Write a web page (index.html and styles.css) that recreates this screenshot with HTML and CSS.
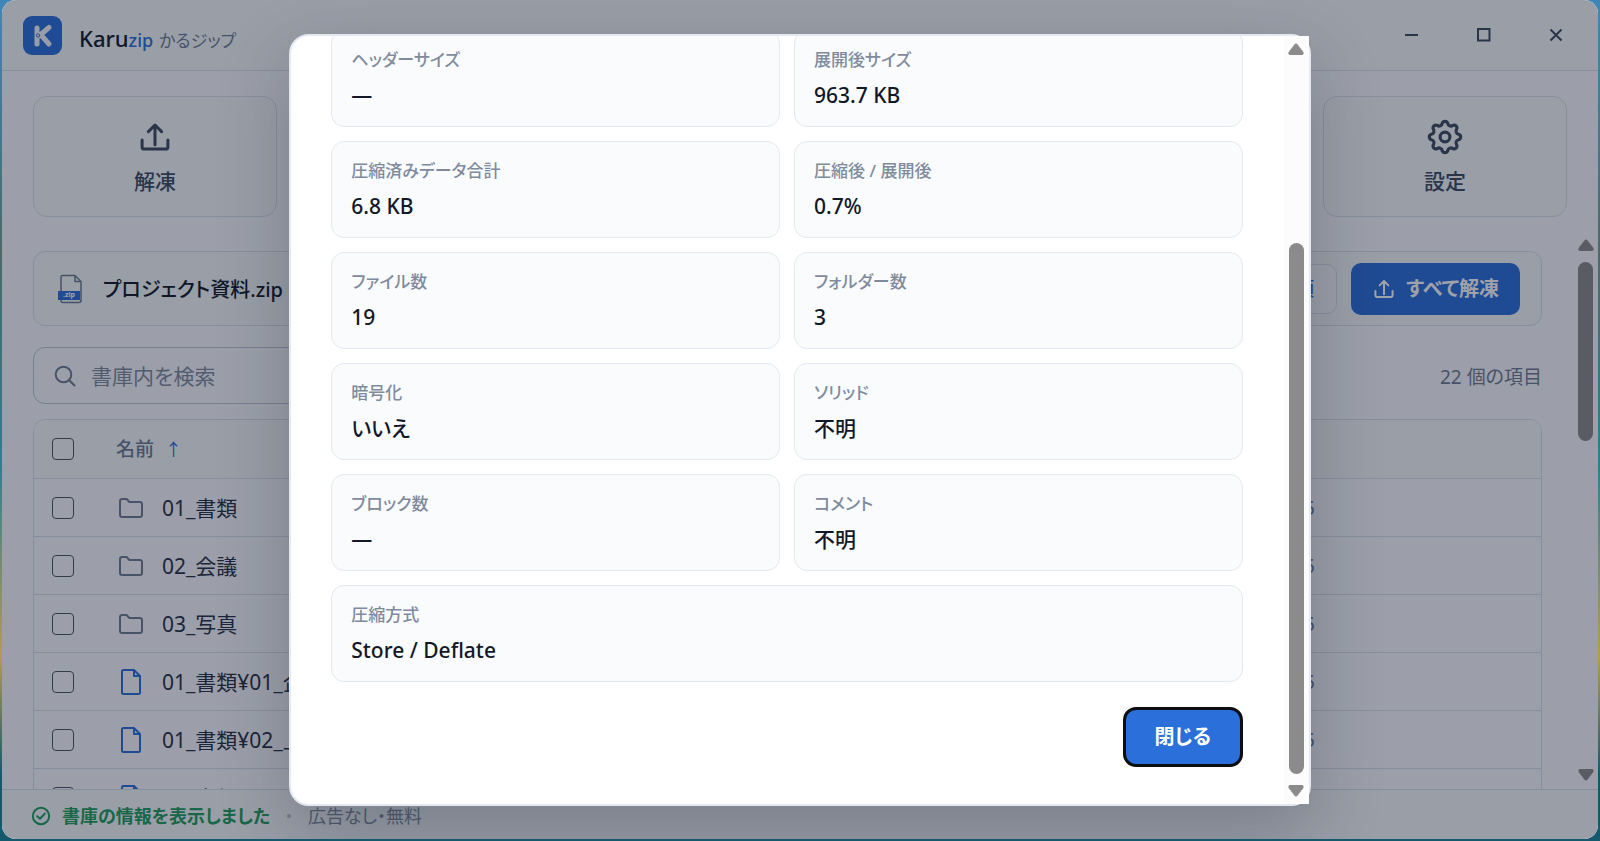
FILE: index.html
```html
<!DOCTYPE html>
<html lang="ja">
<head>
    <meta charset="UTF-8">
    <meta name="viewport" content="width=device-width, initial-scale=1.0">
    <title>Karuzip</title>
    <link rel="stylesheet" href="styles.css">
</head>

<body>

    <!-- shared icons -->
    <svg class="sprite" aria-hidden="true">
        <symbol id="icon-upload" viewBox="0 0 24 24">
            <path d="M3.4 14v4.6q0 1.4 1.4 1.4h14.4q1.4 0 1.4-1.4V14M12 17.2V4M7.6 8.4 12 4l4.4 4.4"/>
        </symbol>
        <symbol id="icon-folder" viewBox="0 0 26 22">
            <path d="M2 4.2Q2 2 4.2 2H8.6L11.4 5H21.8Q24 5 24 7.2V17.8Q24 20 21.8 20H4.2Q2 20 2 17.8Z"/>
        </symbol>
        <symbol id="icon-file" viewBox="0 0 22 28">
            <path d="M3.5 2H14L20 8V24.5Q20 26 18.5 26H3.5Q2 26 2 24.5V3.5Q2 2 3.5 2ZM14 2V8H20"/>
        </symbol>
        <symbol id="icon-arrow" viewBox="0 0 16 12">
            <path d="M6.4 1.4Q8 -.6 9.6 1.4L15.2 8.8Q16.4 11.6 14 12H2Q-.4 11.6 .8 8.8Z"/>
        </symbol>
    </svg>

    <div class="window">

        <header class="titlebar">
            <svg class="logo" viewBox="0 0 39 39" aria-hidden="true">
                <rect class="logo-bg" width="39" height="39" rx="9"/>
                <path class="logo-k" d="M14 12V28M26 11.5 16 20M18.5 19.5 26 28"/>
                <circle class="logo-dot" cx="15" cy="19.5" r="1.7"/>
            </svg>
            <h1 class="brand">Karu<span class="brand-zip">zip</span> <span class="brand-kana">かるジップ</span></h1>

            <div class="window-buttons">
                <button type="button" aria-label="最小化">
                    <svg viewBox="0 0 14 14"><path d="M0 7h13"/></svg>
                </button>
                <button type="button" aria-label="最大化">
                    <svg viewBox="0 0 14 14"><path d="M1 1h11.5v11.5H1z"/></svg>
                </button>
                <button type="button" aria-label="ウィンドウを閉じる">
                    <svg viewBox="0 0 14 14"><path d="M1.5 1.5l11 11M12.5 1.5l-11 11"/></svg>
                </button>
            </div>
        </header>

        <nav class="tools">
            <button class="tool" type="button">
                <svg class="tool-icon"><use href="#icon-upload"/></svg>
                解凍
            </button>
            <button class="tool tool-last" type="button">
                <svg class="tool-icon tool-gear" viewBox="-0.5 -0.5 25 25">
                    <circle cx="12" cy="12" r="3.4"/>
                    <path d="M21.51 10.11A2 2 0 0 1 21.51 13.89A2.2 2.2 0 0 0 20.07 17.39A2 2 0 0 1 17.39 20.07A2.2 2.2 0 0 0 13.89 21.51A2 2 0 0 1 10.11 21.51A2.2 2.2 0 0 0 6.61 20.07A2 2 0 0 1 3.93 17.39A2.2 2.2 0 0 0 2.49 13.89A2 2 0 0 1 2.49 10.11A2.2 2.2 0 0 0 3.93 6.61A2 2 0 0 1 6.61 3.93A2.2 2.2 0 0 0 10.11 2.49A2 2 0 0 1 13.89 2.49A2.2 2.2 0 0 0 17.39 3.93A2 2 0 0 1 20.07 6.61A2.2 2.2 0 0 0 21.51 10.11Z"/>
                </svg>
                設定
            </button>
        </nav>

        <div class="workspace">

            <main class="content">

                <section class="archive">
                    <svg class="archive-icon" viewBox="0 0 24 30" aria-hidden="true">
                        <path class="archive-page" d="M4.5 1.5H17L23 7.5V26.5Q23 28.5 21 28.5H5Q3 28.5 3 26.5V3Q3 1.5 4.5 1.5ZM17 1.5V7.5H23"/>
                        <rect class="archive-band" y="17" width="22" height="9"/>
                        <text x="11" y="23" text-anchor="middle">.zip</text>
                    </svg>
                    <h2 class="archive-name">プロジェクト資料.zip</h2>
                    <button class="button button-plain" type="button">項</button>
                    <button class="button button-primary" type="button">
                        <svg><use href="#icon-upload"/></svg>
                        すべて解凍
                    </button>
                </section>

                <div class="search-row">
                    <label class="search">
                        <svg viewBox="0 0 22 22" aria-hidden="true"><circle cx="9.5" cy="9.5" r="7.8"/><path d="M15.2 15.2 20.5 20.5"/></svg>
                        <input type="search" placeholder="書庫内を検索" aria-label="書庫内を検索">
                    </label>
                    <span class="count">22 個の項目</span>
                </div>

                <div class="table-wrap">
                    <table class="files">
                        <thead>
                            <tr>
                                <th class="col-check"><input type="checkbox" aria-label="すべて選択"></th>
                                <th class="col-name">名前 <span class="sort">↑</span></th>
                                <th class="col-date"></th>
                            </tr>
                        </thead>
                        <tbody>
                            <tr>
                                <td><input type="checkbox" aria-label="01_書類"></td>
                                <td><div class="file"><svg class="icon-folder"><use href="#icon-folder"/></svg>01_書類</div></td>
                                <td class="date">5</td>
                            </tr>
                            <tr>
                                <td><input type="checkbox" aria-label="02_会議"></td>
                                <td><div class="file"><svg class="icon-folder"><use href="#icon-folder"/></svg>02_会議</div></td>
                                <td class="date">5</td>
                            </tr>
                            <tr>
                                <td><input type="checkbox" aria-label="03_写真"></td>
                                <td><div class="file"><svg class="icon-folder"><use href="#icon-folder"/></svg>03_写真</div></td>
                                <td class="date">5</td>
                            </tr>
                            <tr>
                                <td><input type="checkbox" aria-label="01_書類¥01_"></td>
                                <td><div class="file"><svg class="icon-file"><use href="#icon-file"/></svg>01_書類¥01_企</div></td>
                                <td class="date">5</td>
                            </tr>
                            <tr>
                                <td><input type="checkbox" aria-label="01_書類¥02_"></td>
                                <td><div class="file"><svg class="icon-file"><use href="#icon-file"/></svg>01_書類¥02_上</div></td>
                                <td class="date">5</td>
                            </tr>
                            <tr>
                                <td><input type="checkbox" aria-label="01_書類"></td>
                                <td><div class="file"><svg class="icon-file"><use href="#icon-file"/></svg>01_書類</div></td>
                                <td class="date"></td>
                            </tr>
                        </tbody>
                    </table>
                </div>

            </main>

            <div class="scrollbar" aria-hidden="true">
                <svg class="scroll-arrow"><use href="#icon-arrow"/></svg>
                <div class="scroll-track">
                    <div class="scroll-thumb thumb-list"></div>
                </div>
                <svg class="scroll-arrow scroll-down"><use href="#icon-arrow"/></svg>
            </div>

        </div>

        <footer class="statusbar">
            <svg viewBox="0 0 20 20" aria-hidden="true"><circle cx="10" cy="10" r="8.2"/><path d="M6.2 10.2 9 12.8 13.8 7.6"/></svg>
            <strong>書庫の情報を表示しました</strong>
            <span class="status-dot"></span>
            <span>広告なし・無料</span>
        </footer>

        <div class="overlay">
            <div class="dialog" role="dialog" aria-modal="true">

                <div class="dialog-body">
                    <dl class="info">
                        <div class="info-card"><dt>ヘッダーサイズ</dt><dd>—</dd></div>
                        <div class="info-card"><dt>展開後サイズ</dt><dd>963.7 KB</dd></div>
                        <div class="info-card"><dt>圧縮済みデータ合計</dt><dd>6.8 KB</dd></div>
                        <div class="info-card"><dt>圧縮後 / 展開後</dt><dd>0.7%</dd></div>
                        <div class="info-card"><dt>ファイル数</dt><dd>19</dd></div>
                        <div class="info-card"><dt>フォルダー数</dt><dd>3</dd></div>
                        <div class="info-card"><dt>暗号化</dt><dd>いいえ</dd></div>
                        <div class="info-card"><dt>ソリッド</dt><dd>不明</dd></div>
                        <div class="info-card"><dt>ブロック数</dt><dd>—</dd></div>
                        <div class="info-card"><dt>コメント</dt><dd>不明</dd></div>
                        <div class="info-card info-wide"><dt>圧縮方式</dt><dd>Store / Deflate</dd></div>
                    </dl>
                    <button class="button button-close" type="button">閉じる</button>
                </div>

                <div class="scrollbar dialog-scrollbar" aria-hidden="true">
                    <svg class="scroll-arrow"><use href="#icon-arrow"/></svg>
                    <div class="scroll-track">
                        <div class="scroll-thumb thumb-dialog"></div>
                    </div>
                    <svg class="scroll-arrow scroll-down"><use href="#icon-arrow"/></svg>
                </div>

            </div>
        </div>

    </div>

</body>
</html>
```

FILE: styles.css
```css
* {
    box-sizing: border-box;
}

:root {
    --primary: #2b6fdb;
    --text: #111827;
    --icon: #3c4a60;
    --muted: #6e7b92;
    --label: #7f8b9d;
    --line: #e4e8f0;
    --line-dark: #d8deea;
    --page: #fafafd;
    --panel: #f5f9fa;
    --green: #1f9d5b;
}

body {
    margin: 0;
    height: 100vh;
    padding: 0 2px 2px;
    overflow: hidden;
    background: linear-gradient(#3f86b8, #4b6a68 30%, #2a7f92 55%, #b79a52 78%, #155a6c 92%);
    color: var(--text);
    font-family: "Noto Sans", "Noto Sans CJK JP", sans-serif;
    font-size: 21px;
    line-height: 28px;
    font-feature-settings: "palt";
}

h1, h2, dl, dd {
    margin: 0;
}

button, input {
    font: inherit;
    color: inherit;
    font-feature-settings: inherit;
}

svg {
    flex: none;
    fill: none;
    stroke: currentColor;
    stroke-linecap: round;
    stroke-linejoin: round;
    stroke-width: 2;
}

.sprite {
    position: absolute;
    width: 0;
    height: 0;
}

.window {
    position: relative;
    height: 100%;
    display: flex;
    flex-direction: column;
    overflow: hidden;
    border-radius: 14px;
    background: var(--page);
}

/* title bar */

.titlebar {
    flex: none;
    height: 71px;
    display: flex;
    align-items: center;
    padding: 0 6px 0 21px;
    border-bottom: 1px solid var(--line-dark);
    background: var(--panel);
}

.logo {
    width: 39px;
    height: 39px;
}

.logo-bg {
    fill: var(--primary);
    stroke: none;
}

.logo-k {
    stroke: #f4f7fb;
    stroke-width: 5;
}

.logo-dot {
    fill: #f4f7fb;
    stroke: var(--primary);
    stroke-width: 1;
}

.brand {
    margin-left: 17px;
    padding-top: 8px;
    font-size: 22px;
    font-weight: 500;
}

.brand-zip {
    color: var(--primary);
    font-size: 18px;
}

.brand-kana {
    color: var(--muted);
    font-size: 17px;
    font-weight: 400;
}

.window-buttons {
    margin-left: auto;
    display: flex;
    color: var(--icon);
}

.window-buttons button {
    width: 72px;
    height: 70px;
    display: grid;
    place-items: center;
    padding: 0;
    border: 0;
    background: none;
}

.window-buttons svg {
    width: 14px;
    height: 14px;
    stroke-linecap: butt;
    stroke-linejoin: miter;
}

/* tool buttons */

.tools {
    flex: none;
    display: grid;
    grid-template-columns: repeat(6, 1fr);
    gap: 14px;
    padding: 25px 31px 18px;
}

.tool {
    height: 121px;
    display: flex;
    flex-direction: column;
    align-items: center;
    justify-content: center;
    gap: 12px;
    padding: 0;
    border: 1px solid var(--line-dark);
    border-radius: 14px;
    background: var(--panel);
    color: var(--icon);
    font-weight: 500;
}

.tool-last {
    grid-column: 6;
}

.tool-icon {
    width: 36px;
    height: 36px;
}

.tool-gear {
    stroke-width: 2.2;
}

/* archive contents */

.workspace {
    flex: 1;
    min-height: 0;
    display: flex;
    overflow: hidden;
}

.content {
    flex: 1;
    padding: 16px 31px 0;
}

.archive {
    height: 75px;
    display: flex;
    align-items: center;
    gap: 14px;
    padding: 0 21px 0 24px;
    border: 1px solid var(--line-dark);
    border-radius: 12px;
    background: var(--panel);
}

.archive-icon {
    width: 24px;
    height: 30px;
}

.archive-page {
    stroke: var(--muted);
    stroke-width: 1.5;
}

.archive-band {
    fill: var(--primary);
    stroke: none;
}

.archive-icon text {
    fill: #fff;
    stroke: none;
    font-size: 7px;
    font-weight: 700;
}

.archive-name {
    flex: 1;
    padding: 2px 0 0 7px;
    font-size: 20px;
    font-weight: 500;
}

.button {
    display: flex;
    align-items: center;
    justify-content: center;
    gap: 10px;
    border: 0;
    border-radius: 10px;
    font-weight: 600;
}

.button-plain {
    height: 50px;
    padding: 0 22px;
    border: 1px solid var(--line-dark);
    background: var(--page);
    color: var(--primary);
    font-size: 19px;
    font-weight: 500;
}

.button-primary {
    height: 52px;
    padding: 0 21px;
    background: var(--primary);
    color: #fff;
    font-size: 20px;
}

.button-primary svg {
    width: 24px;
    height: 24px;
}

.search-row {
    display: flex;
    align-items: center;
    justify-content: space-between;
    margin: 21px 0 15px;
}

.search {
    width: 60%;
    height: 57px;
    display: flex;
    align-items: center;
    gap: 15px;
    padding: 0 20px;
    border: 1px solid #bcc5d6;
    border-radius: 12px;
    color: var(--muted);
}

.search svg {
    width: 22px;
    height: 22px;
}

.search input {
    flex: 1;
    padding: 0;
    border: 0;
    outline: 0;
    background: none;
}

.search input::placeholder {
    color: var(--label);
    opacity: 1;
}

.count {
    padding-top: 2px;
    color: var(--muted);
    font-size: 19px;
}

.table-wrap {
    border: 1px solid var(--line-dark);
    border-radius: 12px;
    overflow: hidden;
}

.files {
    width: 100%;
    table-layout: fixed;
    border-collapse: collapse;
}

.files tr {
    height: 58px;
    border-bottom: 1px solid var(--line-dark);
}

.files thead tr {
    background: var(--panel);
}

.files th, .files td {
    padding: 1px 0 0;
    text-align: left;
}

.files th {
    color: var(--muted);
    font-size: 19px;
    font-weight: 500;
}

.col-check {
    width: 82px;
}

.col-date {
    width: 237px;
}

.files input {
    display: block;
    appearance: none;
    width: 22px;
    height: 22px;
    margin: 0 0 0 18px;
    border: 1px solid #50545e;
    border-radius: 4px;
}

.sort {
    margin-left: 6px;
    color: var(--primary);
    font-size: 17px;
    font-weight: 400;
}

.file {
    display: flex;
    align-items: center;
    gap: 18px;
    white-space: nowrap;
    padding-left: 2px;
    color: #253044;
}

.icon-folder, .icon-file {
    width: 26px;
    height: 22px;
    color: var(--muted);
}

.icon-file {
    height: 28px;
    color: var(--primary);
}

.date {
    color: var(--muted);
    font-size: 19px;
}

/* scrollbars */

.scrollbar {
    flex: none;
    width: 25px;
    display: flex;
    flex-direction: column;
    align-items: center;
    gap: 11px;
    padding: 4px 0 8px;
    color: #8b8b8b;
}

.scroll-arrow {
    width: 16px;
    height: 12px;
    fill: currentColor;
    stroke: none;
}

.scroll-down {
    transform: rotate(180deg);
}

.scroll-track {
    flex: 1;
    width: 15px;
    display: flex;
    flex-direction: column;
}

.scroll-thumb {
    border-radius: 8px;
    background: currentColor;
}

.thumb-list {
    height: 36%;
}

.thumb-dialog {
    height: 75%;
    margin-top: auto;
}

/* status bar */

.statusbar {
    flex: none;
    height: 50px;
    display: flex;
    align-items: center;
    padding: 2px 29px 0;
    border-top: 1px solid var(--line-dark);
    background: var(--panel);
    color: var(--label);
    font-size: 18px;
}

.statusbar svg {
    width: 20px;
    height: 20px;
    color: var(--green);
}

.statusbar strong {
    margin-left: 11px;
    color: var(--green);
    font-weight: 600;
}

.status-dot {
    width: 4px;
    height: 4px;
    margin: 0 17px;
    border-radius: 50%;
    background: #bcc3d0;
}

/* archive info dialog */

.overlay {
    position: absolute;
    inset: 0;
    display: grid;
    place-items: center;
    padding-top: 1px;
    background: rgba(15, 23, 42, 0.4);
}

.dialog {
    width: 64%;
    height: calc(100% - 66px);
    display: flex;
    border: 2px solid var(--line);
    border-radius: 20px;
    background: #fff;
    box-shadow: 0 24px 72px rgba(15, 23, 42, 0.24);
}

.dialog-body {
    flex: 1;
    display: flex;
    flex-direction: column;
    justify-content: flex-end;
    overflow: hidden;
    padding: 0 41px 37px 40px;
    border-radius: 18px 0 0 18px;
}

.info {
    display: grid;
    grid-template-columns: 1fr 1fr;
    gap: 14px;
}

.info-card {
    padding: 15px 19px 17px;
    border: 1px solid var(--line);
    border-radius: 13px;
    background: #fafbfd;
}

.info-wide {
    grid-column: 1 / -1;
}

.info-card dt {
    margin-bottom: 7px;
    color: var(--label);
    font-size: 17px;
    font-weight: 500;
}

.info-card dd {
    font-weight: 500;
}

.button-close {
    flex: none;
    align-self: flex-end;
    width: 120px;
    height: 60px;
    margin-top: 25px;
    border: 3px solid #0c0e12;
    border-radius: 13px;
    background: var(--primary);
    color: #fff;
    font-size: 20px;
}

.dialog-scrollbar {
    padding: 7px 0;
    background: #fcfcfc;
}
```
